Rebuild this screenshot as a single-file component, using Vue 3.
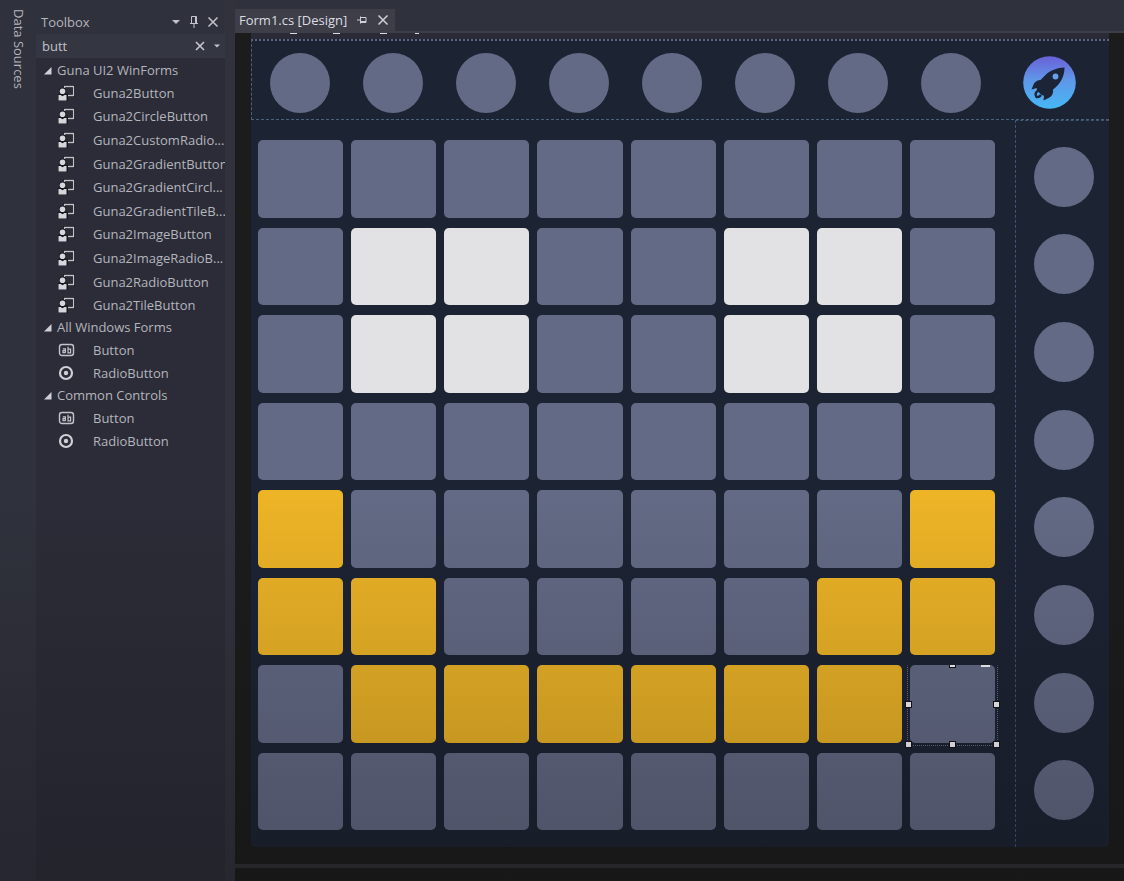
<script setup>
import { ref } from 'vue'

const query = ref('butt')

const groups = [
  {
    name: 'Guna UI2 WinForms',
    size: 'ten',
    items: [
      'Guna2Button',
      'Guna2CircleButton',
      'Guna2CustomRadio...',
      'Guna2GradientButton',
      'Guna2GradientCircl...',
      'Guna2GradientTileB...',
      'Guna2ImageButton',
      'Guna2ImageRadioB...',
      'Guna2RadioButton',
      'Guna2TileButton',
    ].map((name) => ({ name, icon: 'component' })),
  },
  {
    name: 'All Windows Forms',
    size: 'two',
    items: [
      { name: 'Button', icon: 'button' },
      { name: 'RadioButton', icon: 'radio' },
    ],
  },
  {
    name: 'Common Controls',
    size: 'two',
    items: [
      { name: 'Button', icon: 'button' },
      { name: 'RadioButton', icon: 'radio' },
    ],
  },
]

const pattern = [
  '........',
  '.WW..WW.',
  '.WW..WW.',
  '........',
  'Y......Y',
  'YY....YY',
  '.YYYYYYS',
  '........',
]
const kinds = { '.': 'off', W: 'white', Y: 'yellow', S: 'off selected' }
const pads = pattern.flatMap((row, r) =>
  [...row].map((c, i) => ({ id: `Pad ${r + 1}-${i + 1}`, kind: kinds[c], selected: c === 'S' })),
)
const handles = ['top', 'tag', 'left', 'right', 'bottom-left', 'bottom', 'bottom-right']
</script>

<template>
  <div class="ide">
    <nav class="rail">
      <button class="rail-tab">Data Sources</button>
    </nav>

    <aside class="toolbox">
      <header class="tool-title">
        <h2>Toolbox</h2>
        <button aria-label="Window position">
          <svg width="10" height="12" viewBox="0 0 10 12"><path d="M1 4h8L5 8z" fill="#c3c4cb" /></svg>
        </button>
        <button aria-label="Auto hide">
          <svg width="10" height="14" viewBox="0 0 10 14" fill="none" stroke="#c3c4cb">
            <path d="M2.500 8V1.500h5V8M1 8.500h8M5 8.500V13" /><path d="M6.500 2v6" />
          </svg>
        </button>
        <button aria-label="Close toolbox">
          <svg width="12" height="12" viewBox="0 0 12 12" fill="none" stroke="#c3c4cb" stroke-width="1.500">
            <path d="M1.500 1.500l9 9M10.500 1.500l-9 9" />
          </svg>
        </button>
      </header>

      <div class="search">
        <input v-model="query" type="text" aria-label="Search Toolbox" />
        <button aria-label="Clear search" @click="query = ''">
          <svg width="10" height="10" viewBox="0 0 10 10" fill="none" stroke="#c8c9d0" stroke-width="1.600">
            <path d="M1 1l8 8M9 1l-8 8" />
          </svg>
        </button>
        <button aria-label="Search options">
          <svg width="8" height="10" viewBox="0 0 8 10"><path d="M1 3.500h6L4 6.500z" fill="#c3c4cb" /></svg>
        </button>
      </div>

      <section v-for="group in groups" :key="group.name">
        <h3>
          <svg width="8" height="8" viewBox="0 0 8 8"><path d="M7.500 0v7.500H0z" fill="#cfd0d6" /></svg>
          {{ group.name }}
        </h3>
        <ul :class="group.size">
          <li v-for="item in group.items" :key="item.name">
            <button class="tool">
              <svg v-if="item.icon === 'component'" width="18" height="18" viewBox="0 0 18 18">
                <path d="M5 1h12v12H9V8H5z" fill="#16171c" />
                <path d="M6.500 4V2.500h9v9H10" fill="none" stroke="#c3c4cb" stroke-width="1.300" />
                <path d="M7 4h7v6h-4L7 6z" fill="#2b2c37" />
                <path d="M0 10h10v7H0z" fill="#16171c" />
                <circle cx="4.500" cy="7" r="3.600" fill="#16171c" />
                <circle cx="4.500" cy="7.200" r="2.800" fill="#d6d7dc" />
                <path d="M.5 11h2l2 1.200 2-1.200h2v5.500h-8z" fill="#d6d7dc" />
              </svg>
              <svg v-else-if="item.icon === 'button'" width="18" height="18" viewBox="0 0 18 18" fill="none" stroke="#c3c4cb">
                <rect x="1.500" y="3.500" width="14" height="11" rx="2.500" stroke-width="1.400" />
                <path d="M4.800 7.800h2.600v4M7.400 9.700H5v2h2.400M10 5.800v6h2.600V8.200H10" stroke-width="1.200" />
              </svg>
              <svg v-else width="18" height="18" viewBox="0 0 18 18">
                <circle cx="8" cy="9" r="6" fill="none" stroke="#cfd0d6" stroke-width="2.200" />
                <circle cx="8" cy="9" r="2.200" fill="#cfd0d6" />
              </svg>
              <span>{{ item.name }}</span>
            </button>
          </li>
        </ul>
      </section>
    </aside>

    <main class="editor">
      <div class="tabs">
        <div class="tab">
          <a href="#form">Form1.cs [Design]</a>
          <button aria-label="Pin tab">
            <svg width="10" height="10" viewBox="0 0 10 10" fill="none" stroke="#d0d1d8">
              <path d="M0 5h3.500M3.500 1.500v7M3.500 2.500H9v5H3.500" /><path d="M4 6.500h5" />
            </svg>
          </button>
          <button aria-label="Close tab">
            <svg width="12" height="12" viewBox="0 0 12 12" fill="none" stroke="#d0d1d8" stroke-width="1.500">
              <path d="M1.500 1.500l9 9M10.500 1.500l-9 9" />
            </svg>
          </button>
        </div>
      </div>

      <div class="canvas">
        <div id="form" class="form">
          <div class="caption">
            <svg width="180" height="2" viewBox="0 0 180 2" fill="#d9dade">
              <path d="M39 0h7v1h-7zM82 0h7v1h-7zM129 0h7v1h-7zM164 0h4v1h-4z" />
            </svg>
          </div>
          <div class="top-panel">
            <div class="top-pads">
              <button v-for="n in 8" :key="n" class="round" :aria-label="`Top ${n}`"></button>
            </div>
            <div class="logo-slot">
              <svg width="53" height="53" viewBox="0 0 53 53">
                <defs>
                  <linearGradient id="sky" x1="0" y1="0" x2="0" y2="1">
                    <stop offset="0" stop-color="#6a60d8" />
                    <stop offset=".45" stop-color="#5f97e8" />
                    <stop offset="1" stop-color="#46b8f4" />
                  </linearGradient>
                </defs>
                <circle cx="26.500" cy="26.500" r="26.300" fill="url(#sky)" />
                <path
                  d="M41.500 11.500c-9 .5-16 3.500-21 9.500l-3 3c-3 0-5.500 1.500-7 4.500l-2 5 5-1.500c.5 1 .2 2 1 3l3.500 3.500c1 1 2 .8 3 1.200L20.500 44.500l6-3c3-2 4-4.500 3.500-8C37 28.500 41.500 21 41.500 11.500z"
                  fill="#1c2438"
                />
                <circle cx="32.500" cy="20.500" r="2.900" fill="#67a0ef" />
                <path d="M15.500 34.500c-3 1.500-3.800 4-2 6.500 2 .3 3.500-.5 4.500-2" fill="none" stroke="#1c2438" stroke-width="2.400" />
              </svg>
            </div>
          </div>
          <div class="body">
            <div class="board">
              <button v-for="pad in pads" :key="pad.id" class="pad" :class="pad.kind" :aria-label="pad.id">
                <span v-if="pad.selected" class="selection">
                  <i v-for="h in handles" :key="h" :class="h"></i>
                </span>
              </button>
            </div>
            <div class="side-panel">
              <button v-for="n in 8" :key="n" class="round" :aria-label="`Side ${n}`"></button>
            </div>
          </div>
        </div>
      </div>
      <div class="tray"></div>
    </main>
    <div class="shade"></div>
  </div>
</template>

<style>
body {
  margin: 0;
  background: #2d2e38;
}
</style>

<style scoped>
.ide {
  display: flex;
  position: relative;
  min-height: 100vh;
  background: #2f313c;
  color: #b4b5bd;
  font: 13px/20px "Open Sans", "Noto Sans", sans-serif;
}
button {
  padding: 0;
  border: 0;
  background: none;
  color: inherit;
  font: inherit;
  display: block;
}
svg {
  display: block;
  flex: none;
}
.rail {
  width: 36px;
  flex: none;
  box-sizing: border-box;
  padding-top: 9px;
}
.rail-tab {
  writing-mode: vertical-rl;
  margin-left: 9px;
  line-height: 20px;
}
.toolbox {
  width: 189px;
  flex: none;
  background: linear-gradient(#2f313c 34px, #2b2c37 34px);
}
.tool-title {
  height: 34px;
  box-sizing: border-box;
  display: flex;
  align-items: center;
  gap: 8px;
  padding: 10px 6px 0 5px;
}
h2,
h3 {
  margin: 0;
  font: inherit;
}
h2 {
  flex: 1;
}
.search {
  height: 24px;
  margin-bottom: 2px;
  display: flex;
  align-items: center;
  gap: 8px;
  padding: 0 4px 0 6px;
  background: #343641;
}
.search input {
  flex: 1;
  min-width: 0;
  padding: 0;
  border: 0;
  outline: 0;
  background: none;
  color: #c0c1c9;
  font: inherit;
}
h3 {
  height: 21px;
  line-height: 21px;
  display: flex;
  align-items: center;
  gap: 5px;
  padding-left: 8px;
}
ul {
  list-style: none;
  margin: 0;
  padding: 0;
  display: grid;
  grid-auto-rows: 1fr;
}
.ten {
  height: 236px;
}
.two {
  height: 47px;
}
.tool {
  width: 100%;
  height: 100%;
  display: flex;
  align-items: center;
  gap: 17px;
  padding-left: 22px;
  white-space: nowrap;
}
.editor {
  flex: 1;
  min-width: 0;
  display: flex;
  flex-direction: column;
  border-left: 10px solid #31323c;
  background: #1c1c1c;
}
.tabs {
  height: 31px;
  flex: none;
  display: flex;
  align-items: flex-end;
  background: #2f313c;
  border-bottom: 2px solid #3d3e47;
}
.tab {
  height: 22px;
  line-height: 24px;
  display: flex;
  align-items: center;
  gap: 10px;
  padding: 0 6px 0 4px;
  background: #3d3e47;
  color: #dcdce2;
}
.tab a {
  color: inherit;
  text-decoration: none;
}
.canvas {
  flex: 1;
  display: flex;
  padding: 0 15px 17px 16px;
}
.form {
  flex: 1;
  display: flex;
  flex-direction: column;
  background: #1c2333;
  border-radius: 0 0 4px 4px;
}
.caption {
  height: 6px;
  background: #2a2b36;
}
.top-panel {
  height: 81px;
  box-sizing: border-box;
  display: flex;
  border: 1px dashed #4c607f;
  border-top: 2px dotted #5d6482;
  border-right: 0;
}
.top-pads {
  flex: 1;
  display: grid;
  grid-template-columns: repeat(8, 1fr);
  column-gap: 8px;
  padding: 6px 21px 0 5px;
  place-items: center;
}
.logo-slot {
  width: 94px;
  box-sizing: border-box;
  padding: 15px 0 0 8px;
}
.round {
  width: 60px;
  height: 60px;
  border-radius: 50%;
  background: #636a85;
}
.body {
  flex: 1;
  display: flex;
}
.board {
  flex: 1;
  display: grid;
  grid-template-columns: repeat(8, 1fr);
  grid-template-rows: repeat(8, 1fr);
  gap: 10px 8px;
  padding: 20px 20px 17px 7px;
}
.side-panel {
  width: 94px;
  box-sizing: border-box;
  display: grid;
  grid-template-rows: repeat(8, 1fr);
  row-gap: 10px;
  place-items: center;
  padding: 17px 0 18px 2px;
  border: 1px dashed #3f5573;
  border-width: 1px 0 0 1px;
}
.pad {
  border-radius: 5px;
  background: #636a85;
}
.white {
  background: #e2e1e4;
}
.yellow {
  background: #edb426;
}
.selected {
  position: relative;
}
.selection {
  position: absolute;
  inset: 0 -3px -3px;
  border: 1px dotted #686b7c;
  border-top-color: transparent;
}
.selection i {
  position: absolute;
  width: 5px;
  height: 5px;
  background: #f8f8fa;
  border: 1px solid #11131b;
}
.selection .top {
  top: -1px;
  left: calc(50% - 3px);
  height: 2px;
  border-width: 0 1px 1px;
}
.selection .tag {
  top: -1px;
  right: 7px;
  width: 9px;
  height: 2px;
  border: 0;
}
.selection .left {
  left: -3px;
  top: calc(50% - 4px);
}
.selection .right {
  right: -3px;
  top: calc(50% - 4px);
}
.selection .bottom-left {
  left: -3px;
  bottom: -3px;
}
.selection .bottom {
  left: calc(50% - 3px);
  bottom: -3px;
}
.selection .bottom-right {
  right: -3px;
  bottom: -3px;
}
.tray {
  height: 13px;
  border-top: 4px solid #303034;
}
.shade {
  position: absolute;
  inset: 0;
  pointer-events: none;
  background: linear-gradient(transparent 56%, rgba(10, 10, 10, 0.26));
}
</style>
